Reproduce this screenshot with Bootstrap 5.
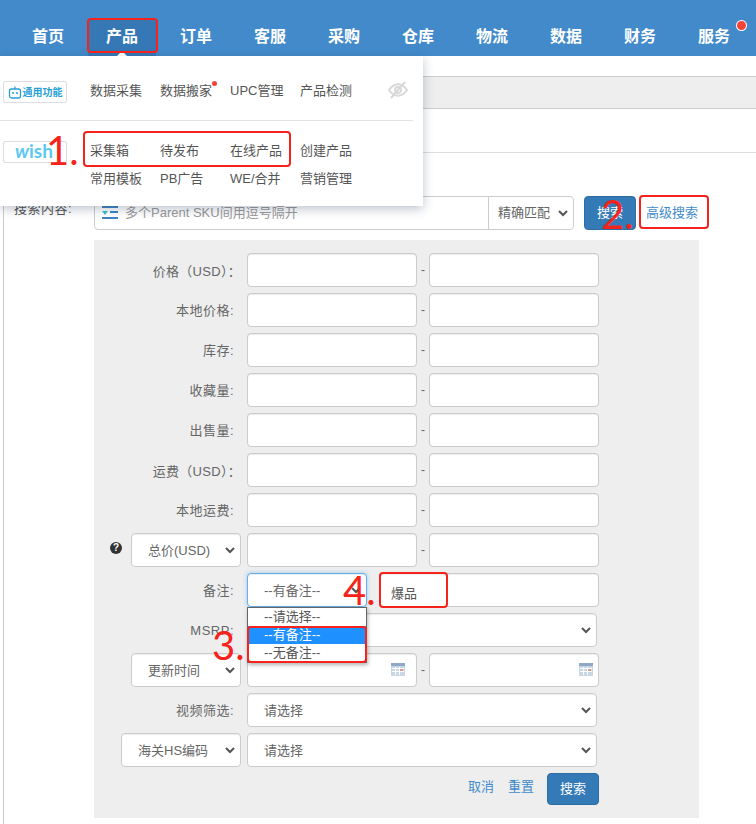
<!DOCTYPE html>
<html lang="zh">
<head>
<meta charset="utf-8">
<title>产品搜索</title>
<link href="https://cdn.jsdelivr.net/npm/bootstrap@5.3.0/dist/css/bootstrap.min.css" rel="stylesheet">
<style>
html,body{height:824px;overflow:hidden}
body{font-family:"Liberation Sans","Noto Sans CJK SC",sans-serif;font-size:13px;color:#666;background:#fff;position:relative}
.topbar{height:56px;background:#428aca;padding-left:11px}
.topitem{width:74px;height:37px;margin-top:19px;display:flex;justify-content:center;align-items:center;padding-bottom:2px;color:#fff;font-size:16px;font-weight:700;position:relative;text-decoration:none}
.topitem.on::before{content:"";position:absolute;left:3px;right:3px;top:0;bottom:0;background:#3578b5}
.topitem span{position:relative}
.caretup{position:absolute;left:32px;bottom:0;border:5px solid transparent;border-top:0;border-bottom-color:#fff}
.dotnew{position:absolute;width:9px;height:9px;border-radius:50%;background:#f44336;right:5px;top:2px;box-shadow:0 0 0 1px #fff}
.graybar{margin-top:20px;height:33px;background:#eee;border-top:1px solid #ccc;border-bottom:1px solid #ccc}
.contentbox{margin-left:3px;height:715px;border-left:1px solid #ccc}
.rule1{height:44px;border-bottom:1px solid #ddd}
.searchrow{margin-top:43px;padding-left:90px;height:34px;position:relative}
.searchlbl{position:absolute;left:10px;top:3px;color:#555;font-size:13px;letter-spacing:.5px}
.kwgroup{width:480px;height:34px;border:1px solid #ccc;border-radius:4px;background:#fff}
.kwtext{flex:1;color:#999;font-size:13px;padding-left:7px}
.kwicon{margin-left:7px}
.kwsel{width:85px;flex:none;border:0;border-left:1px solid #ccc;border-radius:0 4px 4px 0;height:32px;padding:0 0 0 9px;color:#666;font-size:13px;background-color:#fff}
.btnblue{background:#337ab7;border:1px solid #2e6da4;color:#fff;font-size:13px;border-radius:4px;width:52px;height:34px;padding:0;text-align:center}
.btnblue2{height:32px}
.btngap{margin-left:10px}
.advlink{color:#428bca;text-decoration:none;margin-left:10px;font-size:13px}
.filterpanel{margin:10px 0 0 90px;width:605px;height:578px;background:#eee;padding-top:13px}
.frow{display:flex;align-items:center;height:34px;margin-bottom:6px}
.lblcell{width:153px;padding-right:6px;display:flex;justify-content:flex-end;align-items:center;color:#666;font-size:13px;flex:none}
.lblcell>label{padding:2px 7px 0 0;margin:0;letter-spacing:.5px}
.lblcell>label.lblwide{padding:3px 0 0 0;letter-spacing:.3px}
.fld{height:34px;border:1px solid #ccc;border-radius:4px;background-color:#fff;font-size:13px;color:#666;padding:0 16px;box-shadow:inset 0 1px 1px rgba(0,0,0,.075)}
.w170{width:170px;flex:none}
.w220{width:220px;flex:none}
.w350{width:350px;flex:none}
.w120{width:120px;flex:none}
.w110{width:110px;flex:none}
.dash{width:12px;text-align:center;flex:none;color:#666;font-size:12px}
.form-select.fld,.form-select.kwsel{background-image:url("data:image/svg+xml,%3csvg xmlns='http://www.w3.org/2000/svg' viewBox='0 0 10 7'%3e%3cpath fill='none' stroke='%23555' stroke-width='2' d='M1 1l4 4 4-4'/%3e%3c/svg%3e");background-size:10px 7px;background-position:right 5px center}
.form-select.fld{padding:1px 0 0 16px}
.focusfld{border-color:#66afe9;box-shadow:inset 0 1px 1px rgba(0,0,0,.075),0 0 4px rgba(102,175,233,.6)}
.notefield{margin-left:12px}
.dateicon{position:absolute;top:10px;right:12px}
.dateicon.endicon{right:6px}
.datewrap{position:relative}
.helpdot{width:12px;height:12px;border-radius:50%;background:#333;color:#fff;font-size:10px;font-weight:700;line-height:12px;text-align:center;margin-right:9px;margin-bottom:4px}
.actrow{display:flex;align-items:center;height:32px;width:505px;justify-content:flex-end}
.actrow a{color:#428bca;text-decoration:none;margin-right:13px;font-size:13px;padding-bottom:4px}
.actrow a:first-child{margin-right:14px}
.megamenu{position:absolute;left:0;top:56px;width:423px;height:150px;background:#fff;box-shadow:0 3px 10px rgba(40,60,90,.3);z-index:5}
.megarow{display:flex;align-items:center}
.megacell{width:70px;flex:none;color:#555;font-size:13px;position:relative;white-space:nowrap;height:18px;line-height:18px}
.megagrp1{position:absolute;left:90px;top:26px}
.megagrp2{position:absolute;left:90px;top:86px}
.megagrp2 .megarow+.megarow{margin-top:10px}
.tagbox{position:absolute;left:3px;width:64px;height:22px;border:1px solid #ddd;border-radius:2px;display:flex;align-items:center;justify-content:center;background:#fff}
.tagcommon{top:25px;color:#2a9fd6;font-size:10px;font-weight:700;gap:1px;white-space:nowrap}
.tagwish{top:85px;color:#5cc8f2;font-family:Lato,"Liberation Sans",sans-serif;font-size:19px;font-weight:700;line-height:1;padding-bottom:3px;justify-content:flex-start;padding-left:11px}
.tagwish em{font-style:italic}
.megasep{position:absolute;left:0;top:64px;width:413px;height:1px;background:#e2e2e2}
.eyeoff{position:absolute;left:388px;top:25px}
.newdot{position:absolute;left:52px;top:-1px;width:5px;height:5px;border-radius:50%;background:#f44336}
.optlist{position:absolute;left:247px;top:607px;width:120px;height:56px;background:#fff;border:1px solid #666;z-index:3;box-shadow:1px 2px 4px rgba(0,0,0,.3);color:#555;font-size:13px}
.optlist div{height:18px;line-height:18px;padding-left:16px}
.optlist .picked{background:#1e90ff;color:#fff}
.redbox{position:absolute;border:2px solid #f5231c;border-radius:4px;z-index:8}
.rednum{position:absolute;color:#f5231c;font-family:Lato,"Liberation Sans",sans-serif;font-size:40px;line-height:40px;z-index:9;white-space:nowrap}
.note4{position:absolute;left:391px;top:585px;color:#555;font-size:13px;z-index:9;line-height:18px}
</style>
</head>
<body>
<nav class="topbar d-flex">
  <a class="topitem" href="#"><span>首页</span></a>
  <a class="topitem on" href="#"><span>产品</span><i class="caretup"></i></a>
  <a class="topitem" href="#"><span>订单</span></a>
  <a class="topitem" href="#"><span>客服</span></a>
  <a class="topitem" href="#"><span>采购</span></a>
  <a class="topitem" href="#"><span>仓库</span></a>
  <a class="topitem" href="#"><span>物流</span></a>
  <a class="topitem" href="#"><span>数据</span></a>
  <a class="topitem" href="#"><span>财务</span></a>
  <a class="topitem" href="#"><span>服务</span><i class="dotnew"></i></a>
</nav>

<div class="graybar"></div>
<div class="contentbox">
<div class="rule1"></div>

<div class="searchrow d-flex align-items-center">
  <span class="searchlbl">搜索内容:</span>
  <div class="kwgroup d-flex align-items-center">
    <svg class="kwicon" width="16" height="14" viewBox="0 0 16 14"><rect y="0" width="16" height="2" fill="#3d85c6"/><path d="M0 5h6L3 9z" fill="#37c0d0"/><rect x="8" y="5" width="8" height="2" fill="#3d85c6"/><rect y="11" width="16" height="2" fill="#3d85c6"/></svg>
    <span class="kwtext">多个Parent SKU间用逗号隔开</span>
    <select class="form-select kwsel"><option>精确匹配</option></select>
  </div>
  <button class="btn btnblue btngap" type="button">搜索</button>
  <a class="advlink" href="#">高级搜索</a>
</div>

<section class="filterpanel">
  <div class="frow"><div class="lblcell"><label class="lblwide">价格（USD）：</label></div><input class="form-control fld w170"><span class="dash">-</span><input class="form-control fld w170"></div>
  <div class="frow"><div class="lblcell"><label>本地价格:</label></div><input class="form-control fld w170"><span class="dash">-</span><input class="form-control fld w170"></div>
  <div class="frow"><div class="lblcell"><label>库存:</label></div><input class="form-control fld w170"><span class="dash">-</span><input class="form-control fld w170"></div>
  <div class="frow"><div class="lblcell"><label>收藏量:</label></div><input class="form-control fld w170"><span class="dash">-</span><input class="form-control fld w170"></div>
  <div class="frow"><div class="lblcell"><label>出售量:</label></div><input class="form-control fld w170"><span class="dash">-</span><input class="form-control fld w170"></div>
  <div class="frow"><div class="lblcell"><label class="lblwide">运费（USD）：</label></div><input class="form-control fld w170"><span class="dash">-</span><input class="form-control fld w170"></div>
  <div class="frow"><div class="lblcell"><label>本地运费:</label></div><input class="form-control fld w170"><span class="dash">-</span><input class="form-control fld w170"></div>
  <div class="frow"><div class="lblcell"><span class="helpdot">?</span><select class="form-select fld w110"><option>总价(USD)</option></select></div><input class="form-control fld w170"><span class="dash">-</span><input class="form-control fld w170"></div>
  <div class="frow"><div class="lblcell"><label>备注:</label></div><select class="form-select fld w120 focusfld"><option>--有备注--</option></select><input class="form-control fld w220 notefield"></div>
  <div class="frow"><div class="lblcell"><label>MSRP:</label></div><select class="form-select fld w350"><option></option></select></div>
  <div class="frow"><div class="lblcell"><select class="form-select fld w110"><option>更新时间</option></select></div><div class="datewrap w170"><input class="form-control fld w170"><svg class="dateicon" width="14" height="13" viewBox="0 0 14 13"><rect width="14" height="13" fill="#c9d6e6"/><rect width="14" height="3" fill="#8fa8c8"/><path d="M1 5.500h12M1 8.500h12M4.500 4v8M8.500 4v8" stroke="#fff"/><rect x="9" y="6" width="3" height="2" fill="#d98"/></svg></div><span class="dash">-</span><div class="datewrap w170"><input class="form-control fld w170"><svg class="dateicon endicon" width="14" height="13" viewBox="0 0 14 13"><rect width="14" height="13" fill="#c9d6e6"/><rect width="14" height="3" fill="#8fa8c8"/><path d="M1 5.500h12M1 8.500h12M4.500 4v8M8.500 4v8" stroke="#fff"/><rect x="9" y="6" width="3" height="2" fill="#d98"/></svg></div></div>
  <div class="frow"><div class="lblcell"><label>视频筛选:</label></div><select class="form-select fld w350"><option>请选择</option></select></div>
  <div class="frow"><div class="lblcell"><select class="form-select fld w120"><option>海关HS编码</option></select></div><select class="form-select fld w350"><option>请选择</option></select></div>
  <div class="actrow"><a href="#">取消</a><a href="#">重置</a><button class="btn btnblue btnblue2" type="button">搜索</button></div>
</section>
</div>

<div class="megamenu">
  <div class="tagbox tagcommon">
    <svg width="14" height="14" viewBox="0 0 14 14"><rect x="1.500" y="4" width="11" height="9" rx="2" fill="none" stroke="#2a9fd6" stroke-width="1.300"/><path d="M7 4V1.500" stroke="#2a9fd6" stroke-width="1.300"/><circle cx="5" cy="8" r="1" fill="#2a9fd6"/><circle cx="9" cy="8" r="1" fill="#2a9fd6"/></svg>
    <span>通用功能</span>
  </div>
  <div class="megagrp1 megarow">
    <div class="megacell">数据采集</div>
    <div class="megacell">数据搬家<i class="newdot"></i></div>
    <div class="megacell">UPC管理</div>
    <div class="megacell">产品检测</div>
  </div>
  <svg class="eyeoff" width="20" height="18" viewBox="0 0 20 18" fill="none" stroke="#d8d8d8" stroke-width="2"><path d="M1 9c3-4.200 6-5.800 9-5.800s6 1.600 9 5.800c-3 4.200-6 5.800-9 5.800s-6-1.600-9-5.800z"/><circle cx="10" cy="9" r="3"/><path d="M3 17L17 1"/></svg>
  <div class="megasep"></div>
  <div class="tagbox tagwish"><span><em>w</em>ish</span></div>
  <div class="megagrp2">
    <div class="megarow"><div class="megacell">采集箱</div><div class="megacell">待发布</div><div class="megacell">在线产品</div><div class="megacell">创建产品</div></div>
    <div class="megarow"><div class="megacell">常用模板</div><div class="megacell">PB广告</div><div class="megacell">WE/合并</div><div class="megacell">营销管理</div></div>
  </div>
</div>

<div class="optlist">
  <div>--请选择--</div>
  <div class="picked">--有备注--</div>
  <div>--无备注--</div>
</div>

<div class="redbox" style="left:87px;top:18px;width:71px;height:35px"></div>
<div class="redbox" style="left:83px;top:131px;width:208px;height:36px"></div>
<div class="redbox" style="left:639px;top:195px;width:70px;height:34px"></div>
<div class="redbox" style="left:247px;top:626px;width:120px;height:37px"></div>
<div class="redbox" style="left:379px;top:572px;width:69px;height:36px"></div>
<span class="note4">爆品</span>
<span class="rednum" style="left:46px;top:130px">1.</span>
<span class="rednum" style="left:601px;top:194px">2.</span>
<span class="rednum" style="left:212px;top:625px">3.</span>
<span class="rednum" style="left:343px;top:570px">4.</span>
<script src="https://cdn.jsdelivr.net/npm/bootstrap@5.3.0/dist/js/bootstrap.bundle.min.js"></script>
</body>
</html>
